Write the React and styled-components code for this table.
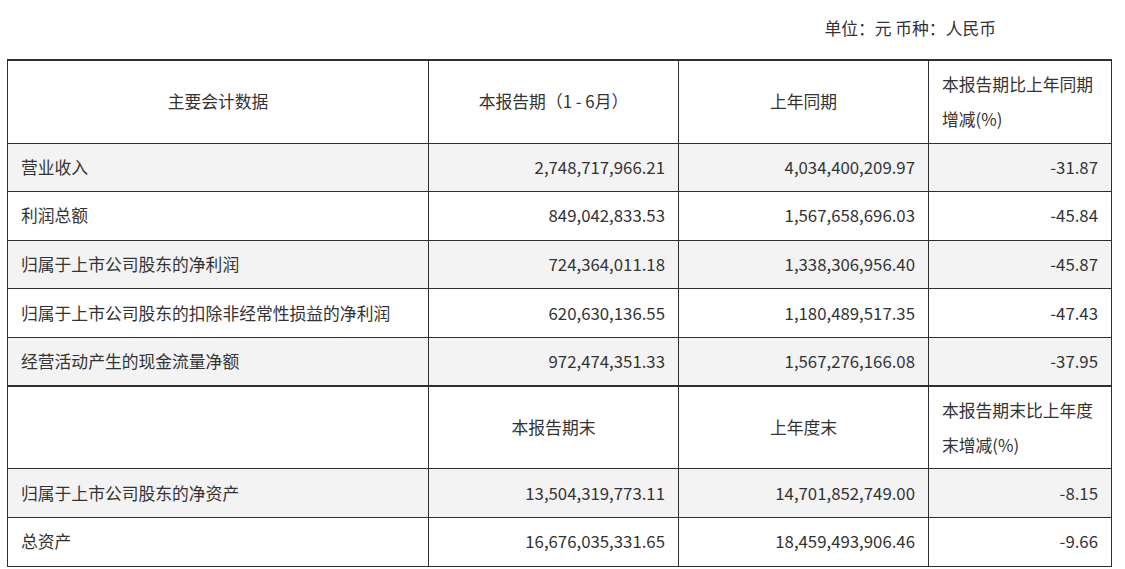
import React from 'react';
import styled, { createGlobalStyle } from 'styled-components';

const GlobalStyle = createGlobalStyle`
  body {
    margin: 0;
    background: #fff;
    font-family: "Noto Sans CJK SC", "Noto Sans", sans-serif;
    color: #333;
  }
`;

const Page = styled.div`
  padding: 16px 0 0 7px;
  width: 1104px;
`;

const UnitLine = styled.div`
  display: flex;
  justify-content: flex-end;
  padding-right: 115px;
  font-size: 16.8px;
  line-height: 24px;
  height: 24px;
  margin-bottom: 19px;
`;

const Table = styled.table`
  width: 1104px;
  table-layout: fixed;
  border-collapse: collapse;
  font-size: 16.8px;
  color: #333;
`;

const Row = styled.tr`
  height: ${(p) => (p.$head ? '83px' : '48.6px')};
  background: ${(p) => (p.$shaded ? '#f3f3f3' : '#fff')};
  border-top: ${(p) => (p.$thickTop ? '2px' : '1px')} solid #2f2f2f;
`;

const Cell = styled.td`
  border-left: 1px solid #2f2f2f;
  border-right: 1px solid #2f2f2f;
  padding: 0 13px;
  text-align: ${(p) => p.$align || 'left'};
  vertical-align: middle;
  line-height: 35px;
  white-space: nowrap;
`;

const Bottom = styled.tbody`
  border-bottom: 1px solid #2f2f2f;
`;

const flows = [
  ['营业收入', '2,748,717,966.21', '4,034,400,209.97', '-31.87'],
  ['利润总额', '849,042,833.53', '1,567,658,696.03', '-45.84'],
  ['归属于上市公司股东的净利润', '724,364,011.18', '1,338,306,956.40', '-45.87'],
  ['归属于上市公司股东的扣除非经常性损益的净利润', '620,630,136.55', '1,180,489,517.35', '-47.43'],
  ['经营活动产生的现金流量净额', '972,474,351.33', '1,567,276,166.08', '-37.95'],
];

const stocks = [
  ['归属于上市公司股东的净资产', '13,504,319,773.11', '14,701,852,749.00', '-8.15'],
  ['总资产', '16,676,035,331.65', '18,459,493,906.46', '-9.66'],
];

function DataRow({ row, shaded }) {
  return (
    <Row $shaded={shaded}>
      <Cell>{row[0]}</Cell>
      <Cell $align="right">{row[1]}</Cell>
      <Cell $align="right">{row[2]}</Cell>
      <Cell $align="right">{row[3]}</Cell>
    </Row>
  );
}

export default function App() {
  return (
    <Page>
      <GlobalStyle />
      <UnitLine>单位：元 币种：人民币</UnitLine>
      <Table>
        <colgroup>
          <col style={{ width: '421px' }} />
          <col style={{ width: '250px' }} />
          <col style={{ width: '250px' }} />
          <col style={{ width: '183px' }} />
        </colgroup>
        <Bottom>
          <Row $head $thickTop>
            <Cell $align="center">主要会计数据</Cell>
            <Cell $align="center">本报告期（1 - 6月）</Cell>
            <Cell $align="center">上年同期</Cell>
            <Cell>本报告期比上年同期<br />增减(%)</Cell>
          </Row>
          {flows.map((row, i) => (
            <DataRow key={row[0]} row={row} shaded={i % 2 === 0} />
          ))}
          <Row $head $thickTop>
            <Cell />
            <Cell $align="center">本报告期末</Cell>
            <Cell $align="center">上年度末</Cell>
            <Cell>本报告期末比上年度<br />末增减(%)</Cell>
          </Row>
          {stocks.map((row, i) => (
            <DataRow key={row[0]} row={row} shaded={i % 2 === 0} />
          ))}
        </Bottom>
      </Table>
    </Page>
  );
}
